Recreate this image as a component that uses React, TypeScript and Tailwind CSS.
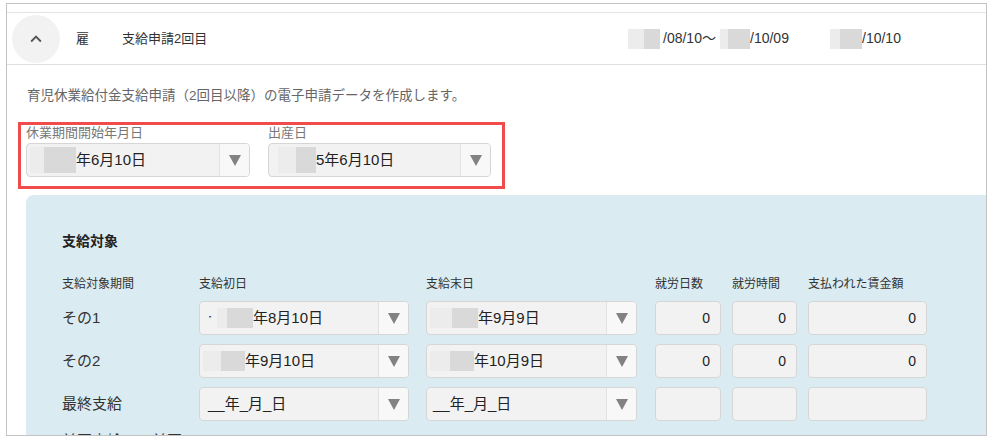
import React from "react";

const font = { fontFamily: '"Liberation Sans", "Noto Sans CJK JP", sans-serif' };

// mosaic blocks hiding the era / year
const Blur: React.FC<{ w: number[]; tall?: boolean }> = ({ w, tall }) => {
  const tones = ["bg-[#ececec]", "bg-[#d9d9d9]", "bg-[#e4e4e4]"];
  return (
    <span className="inline-flex items-center">
      {w.map((x, i) => (
        <span
          key={i}
          className={`${tones[i % 3]} ${tall ? "h-[26px]" : "h-[20px]"} inline-block`}
          style={{ width: x }}
        />
      ))}
    </span>
  );
};

const Arrow = () => (
  <svg width="12" height="11" viewBox="0 0 12 11">
    <polygon points="0,0 12,0 6,11" fill="#828282" />
  </svg>
);

const Select: React.FC<{ w: string; children: React.ReactNode }> = ({ w, children }) => (
  <div className={`${w} h-[34px] flex rounded-[4px] border border-[#d6d6d6] bg-[#f3f2f2] overflow-hidden`}>
    <div className="flex-1 flex items-center pl-[3px] text-[15px] text-[#222] whitespace-nowrap overflow-hidden">
      {children}
    </div>
    <div className="w-[30px] flex items-center justify-center border-l border-[#e2e2e2] bg-[#f8f8f8]">
      <Arrow />
    </div>
  </div>
);

const Num: React.FC<{ w: string; v?: string }> = ({ w, v }) => (
  <div className={`${w} h-[34px] flex items-center justify-end pr-[10px] rounded-[4px] border border-[#d6d6d6] bg-[#f3f2f2] text-[14px] text-[#222]`}>
    {v}
  </div>
);

const rows = [
  { label: "その1", a: <><span className="text-[8px] mx-[3px]">・</span><Blur w={[10, 26]} /><span>年8月10日</span></>, b: <><Blur w={[22, 26]} /><span>年9月9日</span></>, v: "0" },
  { label: "その2", a: <><Blur w={[18, 24]} /><span>年9月10日</span></>, b: <><Blur w={[20, 24]} /><span>年10月9日</span></>, v: "0" },
  { label: "最終支給", a: <span className="pl-[5px]">__年_月_日</span>, b: <span className="pl-[3px]">__年_月_日</span>, v: undefined },
];

export default function App() {
  return (
    <div className="w-[993px] h-[441px] bg-white pl-[6px] pt-[3px] overflow-hidden" style={font}>
      <div className="w-[981px] h-[433px] border border-[#c4c4c4] overflow-hidden">
        <div className="h-[8px]" />
        <div className="border-t border-[#e4e4e4]" />
        {/* header row */}
        <div className="h-[52px] flex items-center border-b border-[#e0e0e0] text-[13px] text-[#333]">
          <div className="w-[621px] flex items-center">
            <div className="ml-[5px] w-12 h-12 rounded-full bg-[#f2f2f2] flex items-center justify-center">
              <svg width="22" height="22" viewBox="0 0 24 24">
                <path d="M7.41 15.41L12 10.83l4.59 4.58L18 14l-6-6-6 6z" fill="#555" />
              </svg>
            </div>
            <span className="ml-4">雇</span>
            <span className="ml-[33px]">支給申請2回目</span>
          </div>
          <div className="flex items-center text-[14px]">
            <Blur w={[16, 16]} />
            <span className="ml-[3px] w-[57px]">/08/10〜</span>
            <Blur w={[8, 22]} />
            <span className="w-[80px]">/10/09</span>
            <Blur w={[10, 22]} />
            <span>/10/10</span>
          </div>
        </div>

        <div className="pl-[20px]">
          <p className="mt-[22px] text-[13.5px] leading-[18px] text-[#666]">
            育児休業給付金支給申請（2回目以降）の電子申請データを作成します。
          </p>

          {/* highlighted dates */}
          <div className="ml-[-9px] mt-[17px] w-[487px] h-[67px] border-[3px] border-[#f04c4c] pl-[5px] flex gap-[18px]">
            <div>
              <div className="h-[18px] text-[13px] leading-[16px] text-[#777]">休業期間開始年月日</div>
              <Select w="w-[224px]">
                <Blur w={[14, 32]} tall />
                <span>年6月10日</span>
              </Select>
            </div>
            <div>
              <div className="h-[18px] text-[13px] leading-[16px] text-[#777]">出産日</div>
              <Select w="w-[223px]">
                <span className="ml-[6px]" />
                <Blur w={[18, 20]} tall />
                <span>5年6月10日</span>
              </Select>
            </div>
          </div>

          {/* payment target panel */}
          <div className="ml-[-1px] mt-[6px] w-[980px] h-[260px] rounded-tl-lg bg-[#daecf2] pl-[36px]">
            <div className="pt-[36px] text-[14px] leading-[20px] font-bold text-[#222]">支給対象</div>
            <div className="mt-[25px] flex text-[12px] leading-[16px] text-[#333]">
              <span className="w-[137px]">支給対象期間</span>
              <span className="w-[227px]">支給初日</span>
              <span className="w-[229px]">支給末日</span>
              <span className="w-[77px]">就労日数</span>
              <span className="w-[76px]">就労時間</span>
              <span>支払われた賃金額</span>
            </div>
            <div className="mt-[9px] flex flex-col gap-[9px]">
              {rows.map((r) => (
                <div key={r.label} className="flex items-center">
                  <span className="w-[137px] text-[15px] text-[#333]">{r.label}</span>
                  <Select w="w-[210px]">{r.a}</Select>
                  <div className="w-[17px]" />
                  <Select w="w-[211px]">{r.b}</Select>
                  <div className="w-[18px]" />
                  <Num w="w-[66px]" v={r.v} />
                  <div className="w-[11px]" />
                  <Num w="w-[65px]" v={r.v} />
                  <div className="w-[11px]" />
                  <Num w="w-[119px]" v={r.v} />
                </div>
              ))}
              <div className="flex text-[15px] text-[#333]">
                <span className="w-[90px]">前回支給</span>
                <span>前回</span>
              </div>
            </div>
          </div>
        </div>
      </div>
    </div>
  );
}
